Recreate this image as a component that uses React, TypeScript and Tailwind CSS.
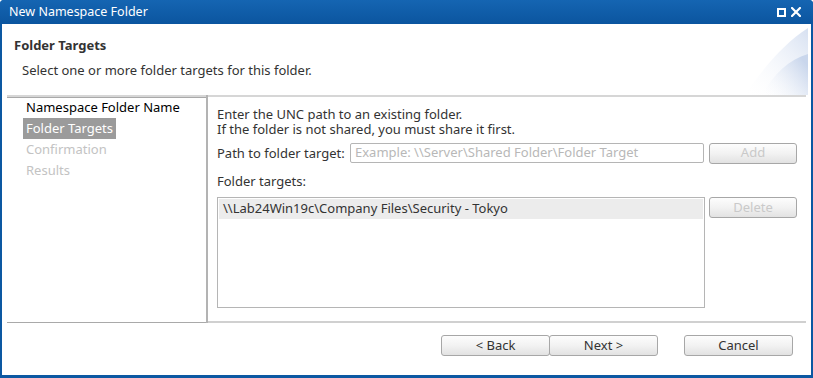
import React from "react";

const font = { fontFamily: '"Noto Sans", "DejaVu Sans", sans-serif' };

function Btn({ children, disabled, className = "" }: { children: React.ReactNode; disabled?: boolean; className?: string }) {
  return (
    <div
      className={`h-[21px] flex items-center justify-center rounded-[3px] border border-[#a7a7a7] bg-gradient-to-b from-[#fdfdfd] via-[#f2f2f2] to-[#e2e2e2] text-[13px] ${disabled ? "text-[#c9c9c9]" : "text-[#333]"} ${className}`}
    >
      {children}
    </div>
  );
}

export default function App() {
  return (
    <div className="w-[813px] h-[378px] bg-white" style={font}>
      <div className="w-full h-full flex flex-col bg-[#0c58a2] rounded-t-[4px]">
        {/* Title bar */}
        <div className="h-[24px] shrink-0 flex items-center justify-between pl-[9px] pr-[12px] bg-gradient-to-b from-[#1565b2] to-[#0b559f] rounded-t-[4px]">
          <span className="text-white text-[12.5px] leading-none">New Namespace Folder</span>
          <div className="flex items-center gap-[5px]">
            <svg width="9" height="9" viewBox="0 0 9 9">
              <rect x="1" y="1" width="7" height="7" fill="none" stroke="white" strokeWidth="2" />
            </svg>
            <svg width="10" height="10" viewBox="0 0 10 10">
              <path d="M1 1 L9 9 M9 1 L1 9" stroke="white" strokeWidth="2.2" strokeLinecap="square" />
            </svg>
          </div>
        </div>
        {/* Body */}
        <div className="flex-1 ml-[2px] mr-[2px] mb-[3px] bg-white flex flex-col">
          {/* Header */}
          <div className="relative h-[71px] shrink-0">
            <svg className="absolute right-[3px] top-[4px]" width="64" height="67" viewBox="0 0 64 67">
              <defs>
                <linearGradient id="g1" x1="0" y1="1" x2="1" y2="0">
                  <stop offset="0" stopColor="#ffffff" stopOpacity="0" />
                  <stop offset="1" stopColor="#d6e0f1" />
                </linearGradient>
                <linearGradient id="g2" x1="0" y1="1" x2="1" y2="0.3">
                  <stop offset="0" stopColor="#ffffff" stopOpacity="0" />
                  <stop offset="1" stopColor="#c9d6ec" />
                </linearGradient>
              </defs>
              <path d="M0 67 C 20 40, 40 15, 64 0 L64 67 Z" fill="url(#g1)" />
              <path d="M18 67 C 30 45, 45 32, 64 26 L64 67 Z" fill="url(#g2)" />
            </svg>
            <div className="absolute left-[12px] top-[12px] text-[13px] font-bold text-[#333]">Folder Targets</div>
            <div className="absolute left-[20px] top-[37px] text-[13px] text-[#333]">Select one or more folder targets for this folder.</div>
          </div>
          {/* Main */}
          <div className="flex-1 flex mx-[5px]">
            <div className="w-[199px] shrink-0 border-t-2 border-t-[#d6d6d6] flex flex-col">
              <div className="border-t border-[#a9a9a9] flex-1 flex flex-col pl-[16px] border-b border-b-[#a9a9a9]">
                <div className="-mt-[1px] h-[21px] flex items-center px-[3px] text-[13px] text-black">Namespace Folder Name</div>
                <div className="h-[21px] flex items-center px-[3px] text-[13px] text-white bg-[#9b9b9b] self-start">Folder Targets</div>
                <div className="h-[21px] flex items-center px-[3px] text-[13px] text-[#c3c3c3]">Confirmation</div>
                <div className="h-[21px] flex items-center px-[3px] text-[13px] text-[#c3c3c3]">Results</div>
              </div>
            </div>
            <div className="w-[2px] bg-[#b3b3b3] shrink-0" />
            <div className="flex-1 border-t-2 border-[#d6d6d6] border-b-2 border-b-[#d0d0d0] pl-[9px] pt-[10px] text-[13px] text-[#333]">
              <div className="leading-[15px]">
                Enter the UNC path to an existing folder.
                <br />
                If the folder is not shared, you must share it first.
              </div>
              <div className="flex items-center mt-[6px] h-[20px]">
                <span className="w-[133px] shrink-0 leading-[16px]">Path to folder target:</span>
                <div className="w-[354px] h-[20px] border border-[#b5b5b5] rounded-[2px] flex items-center pl-[4px] text-[#b8b8b8]">
                  Example: \\Server\Shared Folder\Folder Target
                </div>
                <Btn disabled className="ml-[5px] w-[88px]">Add</Btn>
              </div>
              <div className="mt-[10px] leading-[17px]">Folder targets:</div>
              <div className="flex mt-[7px]">
                <div className="w-[488px] h-[111px] border border-[#b5b5b5] p-[1px]">
                  <div className="h-[20px] bg-[#ececec] flex items-center pl-[4px] text-[#333]">\\Lab24Win19c\Company Files\Security - Tokyo</div>
                </div>
                <Btn disabled className="ml-[4px] w-[88px]">Delete</Btn>
              </div>
            </div>
          </div>
          {/* Footer */}
          <div className="h-[52px] shrink-0 flex items-start pt-[12px] pl-[439px]">
            <Btn className="w-[109px]">&lt; Back</Btn>
            <Btn className="w-[109px] -ml-[1px]">Next &gt;</Btn>
            <Btn className="w-[109px] ml-[26px]">Cancel</Btn>
          </div>
        </div>
      </div>
    </div>
  );
}
